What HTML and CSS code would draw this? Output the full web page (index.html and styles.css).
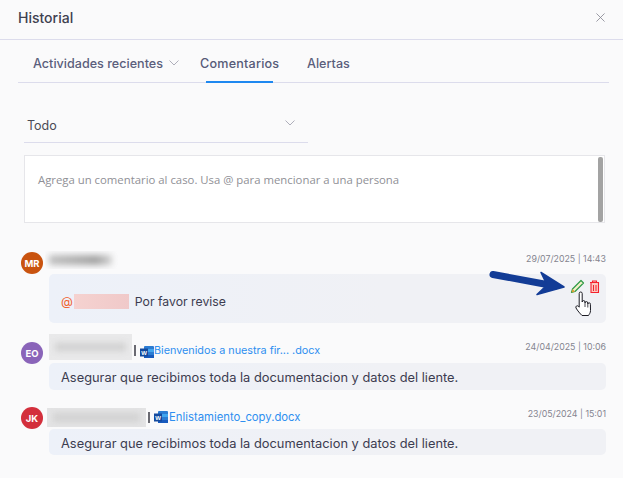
FILE: index.html
```html
<!DOCTYPE html>
<html lang="es">
<head>
<meta charset="utf-8">
<title>Historial</title>
<link rel="stylesheet" href="styles.css">
</head>
<body>
<main class="dialog">
  <header class="dialog-head">
    <h1 class="dialog-title">Historial</h1>
    <svg class="close" viewBox="0 0 10 10" aria-label="Cerrar"><path d="M.5.5l9 9M9.500.5l-9 9"/></svg>
  </header>

  <nav class="tabs">
    <span class="tab tab-first">Actividades recientes
      <svg class="chev" viewBox="0 0 10 6"><path d="M.5.5L5 5 9.500.5"/></svg>
    </span>
    <span class="tab tab-active">Comentarios</span>
    <span class="tab">Alertas</span>
  </nav>

  <div class="select">
    <span>Todo</span>
    <svg class="chev" viewBox="0 0 10 6"><path d="M.5.5L5 5 9.500.5"/></svg>
  </div>

  <div class="composer">
    <span class="placeholder">Agrega un comentario al caso. Usa @ para mencionar a una persona</span>
    <span class="scrollbar"></span>
  </div>

  <section class="comment comment-a">
    <div class="comment-head">
      <span class="avatar avatar-mr">MR</span>
      <span class="name name-a"><i></i></span>
      <time class="date">29/07/2025 | 14:43</time>
    </div>
    <div class="bubble bubble-tall">
      <span class="at">@</span><span class="mention"></span><span>Por favor revise</span>
    </div>
  </section>

  <section class="comment comment-b">
    <div class="comment-head">
      <span class="avatar avatar-eo">EO</span>
      <span class="name name-b"><i></i></span>
      <span class="sep"></span>
      <svg class="word" viewBox="0 0 14 12"><rect x="4" width="10" height="12" rx="1" fill="#2b7cd3"/><rect x="4" y="3" width="10" height="3" fill="#41a5ee"/><rect x="4" y="9" width="10" height="3" fill="#185abd"/><rect y="2.500" width="8" height="8" fill="#144a9e"/><text x="4" y="9" class="word-w">W</text></svg>
      <a class="file">Bienvenidos a nuestra fir... .docx</a>
      <time class="date">24/04/2025 | 10:06</time>
    </div>
    <div class="bubble">Asegurar que recibimos toda la documentacion y datos del liente.</div>
  </section>

  <section class="comment comment-c">
    <div class="comment-head">
      <span class="avatar avatar-jk">JK</span>
      <span class="name name-c"><i></i></span>
      <span class="sep"></span>
      <svg class="word" viewBox="0 0 14 12"><rect x="4" width="10" height="12" rx="1" fill="#2b7cd3"/><rect x="4" y="3" width="10" height="3" fill="#41a5ee"/><rect x="4" y="9" width="10" height="3" fill="#185abd"/><rect y="2.500" width="8" height="8" fill="#144a9e"/><text x="4" y="9" class="word-w">W</text></svg>
      <a class="file">Enlistamiento_copy.docx</a>
      <time class="date">23/05/2024 | 15:01</time>
    </div>
    <div class="bubble">Asegurar que recibimos toda la documentacion y datos del liente.</div>
  </section>

  <svg class="overlay" viewBox="0 0 120 50" aria-hidden="true">
    <path d="M4 6.500L66 18" class="arrow-line"/>
    <path d="M52 4.500L75 19 48 26.500 58 17z" class="arrow-head"/>
    <path d="M82.500 24.500l1-3.500 8.500-8.500 2.500 2.500-8.500 8.500z" class="pencil"/>
    <path d="M82.500 24.500l1-3.500 2.500 2.500z" class="pencil-tip"/>
    <path d="M101 14.500h9M103.500 14.500v-1.500h4v1.500M102 14.500h7.500v10h-7.500z" class="trash"/>
    <path d="M104.500 17v6M107 17v6" class="trash-bars"/>
    <path d="M90.200 25.500a1.500 1.500 0 0 1 3 0v8.500a1.400 1.400 0 0 1 2.800 0v1a1.400 1.400 0 0 1 2.800 0v1a1.300 1.300 0 0 1 2.600.3l.1 6.200c0 2.500-1.200 3.500-2 5h-6.500c-1.800-1.800-4.500-4.800-6-7.500-.8-1.500 1-3 2.400-1.800l.8 1z" class="hand"/>
    <path d="M96 35v4M98.800 36v3.500" class="hand-lines"/>
  </svg>
</main>
</body>
</html>
```
FILE: styles.css
```css
* { box-sizing: border-box; }
html, body { margin: 0; height: 100%; }
body {
  background: #fafafb;
  font-family: Inter, "Liberation Sans", sans-serif;
  color: #3a3a4a;
  overflow: hidden;
}
.dialog {
  position: relative;
  width: 623px;
  height: 478px;
  display: flex;
  flex-direction: column;
}
.dialog-head {
  height: 40px;
  flex: none;
  padding: 0 18px 5px;
  display: flex;
  align-items: center;
  justify-content: space-between;
  border-bottom: 1px solid #dcdcec;
}
.dialog-title {
  margin: 0;
  font-size: 14px;
  font-weight: 500;
  color: #3f4150;
}
.close { width: 9px; height: 9px; }
.close path { stroke: #85858f; fill: none; stroke-width: .9; }

.tabs {
  flex: none;
  height: 43px;
  margin: 0 14px 0 18px;
  padding: 4px 0 0 15px;
  display: flex;
  align-items: center;
  border-bottom: 1px solid #dcdcec;
  font-size: 12.600px;
  font-weight: 500;
  color: #5b5e7c;
}
.tab { position: relative; display: flex; align-items: center; height: 100%; }
.tab-first { width: 167px; gap: 6px; }
.tab-active { width: 107px; color: #565a78; letter-spacing: .2px; }
.tab-active::after {
  content: "";
  position: absolute;
  left: 6px;
  width: 67px;
  bottom: -1px;
  height: 2px;
  background: #1e88f0;
}
.chev { width: 10px; height: 6px; flex: none; }
.chev path { fill: none; stroke: #9a9aaa; stroke-width: .8; }

.select {
  flex: none;
  width: 284px;
  height: 41px;
  margin: 19px 0 0 24px;
  padding: 7px 13px 0 3px;
  display: flex;
  align-items: center;
  justify-content: space-between;
  border-bottom: 1px solid #dcdcec;
  font-size: 12.500px;
  color: #4a4a55;
}
.select .chev { margin-bottom: 5px; }
.composer {
  position: relative;
  flex: none;
  width: 581px;
  height: 68px;
  margin: 12px 0 0 24px;
  padding: 16px 13px 0;
  background: #fff;
  border: 1px solid #e6e6ea;
  font-family: "Open Sans", sans-serif;
  font-size: 11.350px;
  color: #909096;
}
.placeholder { display: block; line-height: 15px; }
.scrollbar {
  position: absolute;
  top: 1px;
  right: 1px;
  width: 5px;
  height: 65px;
  border-radius: 2px;
  background: #a3a3a3;
}

.comment { flex: none; margin-left: 21px; width: 585px; }
.comment-a { margin-top: 28px; }
.comment-b { margin-top: 11px; }
.comment-c { margin-top: 18px; }
.comment-head { display: flex; align-items: flex-end; }
.comment-a .comment-head { height: 23px; }
.comment-b .comment-head { height: 29px; }
.comment-c .comment-head { height: 21px; }
.avatar {
  width: 22px;
  height: 22px;
  flex: none;
  border-radius: 50%;
  display: flex;
  align-items: center;
  justify-content: center;
  color: #fff;
  font-size: 9.500px;
  font-weight: 700;
}
.comment-b .avatar { margin-bottom: -1px; }
.avatar-mr { background: #c9530f; }
.avatar-eo { background: #8a64b9; }
.avatar-jk { background: #d32f3c; }

.name { display: block; flex: none; align-self: flex-start; overflow: hidden; }
.name i { display: block; filter: blur(3px); }
.name-a { width: 73px; height: 18px; margin-left: 2px; }
.name-a i { margin: 4px 6px 0 4px; height: 10px; background: linear-gradient(90deg, #c0c0c0, #a2a2a2 75%, #d4d4d4); }
.name-b { width: 83px; height: 26px; margin-left: 6px; background: #e9e9ea; }
.name-b i { margin: 9px 6px; height: 8px; background: #d0d0d0; }
.name-c { width: 99px; height: 19px; margin-left: 4px; background: #e4e4e5; }
.name-c i { margin: 5px 6px; height: 9px; background: #d2d2d2; }
.sep {
  width: 2px;
  height: 11px;
  background: #6a6a72;
  margin: 0 4px 4px 2px;
  flex: none;
  align-self: flex-start;
}
.comment-b .sep { margin-top: 11px; }
.comment-c .sep { margin-top: 4px; }
.word { width: 14px; height: 12px; flex: none; align-self: flex-start; }
.comment-b .word { margin-top: 12px; }
.comment-c .word { margin-top: 3px; }
.word-w { font: 700 6px "Liberation Sans", sans-serif; fill: #fff; text-anchor: middle; }
.file {
  align-self: flex-start;
  font-size: 11px;
  line-height: 14px;
  color: #2e8ff0;
  white-space: nowrap;
}
.comment-b .file { margin-top: 10px; font-size: 10.800px; }
.comment-c .file { margin-top: 2px; margin-left: 1px; font-size: 11.300px; }
.date {
  margin-left: auto;
  align-self: flex-start;
  font-size: 8.800px;
  line-height: 12px;
  color: #84848f;
  white-space: nowrap;
}
.comment-a .date { margin-top: 2px; }
.comment-b .date { margin-top: 7px; }
.comment-c .date { margin-top: 0; }

.bubble {
  margin-left: 28px;
  height: 27px;
  padding: 2px 12px 0;
  display: flex;
  align-items: center;
  border-radius: 5px;
  background: linear-gradient(90deg, #edf1f9, #f0f1f5 60%);
  font-size: 12.850px;
  color: #3c3c50;
  white-space: nowrap;
}
.comment-c .bubble { height: 26px; }
.bubble-tall { height: 49px; padding-top: 6px; font-size: 12.250px; }
.at { color: #f0602c; }
.mention {
  width: 55px;
  height: 15px;
  margin: 0 6px 0 1px;
  background: linear-gradient(90deg, #f5d2d0, #f0c9c9);
}

.overlay {
  position: absolute;
  left: 489px;
  top: 268px;
  width: 120px;
  height: 50px;
}
.arrow-line { fill: none; stroke: #133c96; stroke-width: 7; stroke-linecap: round; }
.arrow-head { fill: #133c96; stroke: #133c96; stroke-width: 1.500; stroke-linejoin: round; }
.pencil { fill: #f4f0c8; stroke: #2f9a48; stroke-width: 1.200; stroke-linejoin: round; }
.pencil-tip { fill: #d8a030; }
.trash { fill: #fbc8c0; stroke: #f5222d; stroke-width: 1.100; }
.trash-bars { fill: none; stroke: #f5222d; stroke-width: 1; }
.hand { fill: #fff; stroke: #1c1c24; stroke-width: 1; stroke-linejoin: round; }
.hand-lines { fill: none; stroke: #1c1c24; stroke-width: .8; }
```
